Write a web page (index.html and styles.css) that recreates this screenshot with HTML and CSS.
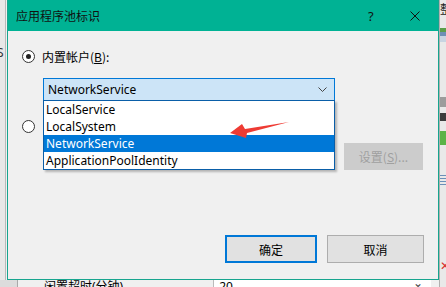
FILE: index.html
```html
<!DOCTYPE html>
<html lang="zh-CN">
<head>
  <meta charset="UTF-8">
  <title>应用程序池标识</title>
  <link rel="stylesheet" href="styles.css">
</head>
<body>
  <div class="desk">
    <div class="side-left"><span class="cut">S</span></div>
    <div class="side-right">
      <span class="ri ri-text">整</span>
      <span class="ri ri-doc"></span>
      <span class="ri ri-play"></span>
      <span class="ri ri-bar"></span>
      <span class="ri ri-green"></span>
      <span class="ri ri-lines"></span>
      <span class="ri ri-red">✕</span>
    </div>
    <div class="under">
      <span class="under-label">闲置超时(分钟)</span>
      <span class="under-field">20<span class="under-chev">⌄</span></span>
    </div>

    <div class="dialog">
      <div class="titlebar">
        <span class="title">应用程序池标识</span>
        <span class="help">?</span>
        <span class="close">
          <svg width="10" height="10" viewBox="0 0 10 10"><path d="M0.5 0.5 L9.5 9.5 M9.5 0.5 L0.5 9.5" stroke="#111" stroke-width="1"/></svg>
        </span>
      </div>

      <div class="content">
        <label class="opt">
          <span class="radio on"></span>
          <span>内置帐户(<u>B</u>):</span>
        </label>

        <div class="combo">
          <span>NetworkService</span>
          <svg class="chev" width="9" height="5" viewBox="0 0 9 5"><path d="M0.5 0.5 L4.5 4.5 L8.5 0.5" fill="none" stroke="#444" stroke-width="1"/></svg>
        </div>

        <label class="opt opt-custom">
          <span class="radio"></span>
          <span class="custom-label">自定义帐户(<u>C</u>):</span>
        </label>

        <div class="set-row">
          <button class="btn btn-disabled" disabled>设置(<u>S</u>)...</button>
        </div>

        <div class="actions">
          <button class="btn btn-default">确定</button>
          <button class="btn btn-cancel">取消</button>
        </div>

        <ul class="list">
          <li>LocalService</li>
          <li>LocalSystem</li>
          <li class="sel">NetworkService</li>
          <li>ApplicationPoolIdentity</li>
        </ul>

        <svg class="arrow" width="62" height="18" viewBox="0 0 62 18">
          <polygon points="0,12 12,3 15,8 59,1 17,12 16,17" fill="#ee3b34"/>
        </svg>
      </div>
    </div>
  </div>
</body>
</html>
```

FILE: styles.css
```css
body {
  margin: 0;
  font-family: "Noto Sans", "Noto Sans CJK SC", sans-serif;
  font-size: 12px;
  color: #000;
}

.desk {
  position: relative;
  width: 446px;
  height: 287px;
  overflow: hidden;
  background: #f0f0f0;
}

/* window behind the dialog */
.side-left {
  position: absolute;
  left: 0;
  top: 0;
  width: 5px;
  height: 287px;
  background: #e8e8e8;
  border-right: 1px solid #b9b9b9;
}

.side-left .cut {
  position: absolute;
  left: -3px;
  top: 44px;
  color: #333;
}

.side-right {
  position: absolute;
  left: 439px;
  top: 0;
  width: 7px;
  height: 287px;
  background: #e9e9e9;
  border-left: 1px solid #b0b0b0;
  display: flex;
  flex-direction: column;
  overflow: hidden;
}

.ri {
  display: block;
  flex: none;
}

.ri-text {
  height: 20px;
  font-size: 12px;
  line-height: 20px;
  color: #222;
}

.ri-doc {
  margin-top: 8px;
  height: 14px;
  background: linear-gradient(#5b9e4a 0 30%, #6d8fb5 30% 60%, #c8d4e2 60%);
}

.ri-play {
  margin-top: 55px;
  height: 10px;
  background: #9c9c9c;
}

.ri-bar {
  margin-top: 6px;
  height: 8px;
  background: #3c3c3c;
}

.ri-green {
  margin-top: 10px;
  height: 14px;
  background: #5bb347;
}

.ri-lines {
  margin-top: 30px;
  height: 12px;
  background: repeating-linear-gradient(#6b8fb8 0 1px, #e9e9e9 1px 3px);
}

.ri-red {
  margin-top: 72px;
  height: 14px;
  color: #d9322e;
  font-size: 12px;
  line-height: 14px;
}

.under {
  position: absolute;
  left: 0;
  top: 280px;
  width: 439px;
  height: 7px;
  display: flex;
  background: linear-gradient(to right, #dcdcdc 0 17px, #a9a9a9 17px 18px, #f0f0f0 18px);
  overflow: hidden;
}

.under-label {
  margin-left: 44px;
  line-height: 14px;
}

.under-field {
  margin-left: 90px;
  width: 212px;
  padding-left: 5px;
  background: #fff;
  border-left: 1px solid #bbb;
  line-height: 14px;
  position: relative;
}

.under-chev {
  position: absolute;
  right: 8px;
  top: -4px;
  color: #444;
}

/* dialog */
.dialog {
  position: absolute;
  left: 7px;
  top: 0;
  width: 430px;
  height: 279px;
  border: 1px solid #17a58f;
  border-top: 0;
  background: #f0f0f0;
  display: flex;
  flex-direction: column;
}

.titlebar {
  height: 31px;
  flex: none;
  background: #00b294;
  display: flex;
  align-items: center;
  padding-left: 8px;
}

.title {
  flex: 1;
  font-family: "Noto Sans CJK SC", sans-serif;
  font-size: 12px;
  color: #111;
}

.help {
  width: 10px;
  margin-right: 32px;
  font-size: 13px;
  color: #111;
}

.close {
  display: flex;
  margin-right: 18px;
}

.content {
  position: relative;
  flex: 1;
  display: flex;
  flex-direction: column;
  padding: 17px 14px 16px 14px;
}

.opt {
  display: flex;
  align-items: center;
  gap: 7px;
  height: 16px;
  font-family: "Noto Sans CJK SC", sans-serif;
}

.custom-label {
  color: #7a4a10;
}

.radio {
  width: 11px;
  height: 11px;
  border: 1px solid #333;
  border-radius: 50%;
  background: #fff;
  position: relative;
  flex: none;
}

.radio.on::after {
  content: "";
  position: absolute;
  left: 3px;
  top: 3px;
  width: 5px;
  height: 5px;
  border-radius: 50%;
  background: #222;
}

.combo {
  margin: 14px 0 0 21px;
  width: 279px;
  height: 21px;
  border: 1px solid #0078d7;
  background: #cce4f7;
  display: flex;
  align-items: center;
  justify-content: space-between;
  padding: 0 7px 0 4px;
}

.opt-custom {
  margin-top: 17px;
}

.set-row {
  display: flex;
  justify-content: flex-end;
  margin-top: 9px;
  padding-right: 1px;
}

.btn {
  font-family: "Noto Sans CJK SC", sans-serif;
  font-size: 12px;
  height: 28px;
  background: #e1e1e1;
  border: 1px solid #adadad;
  padding: 0;
  color: #000;
}

.btn-disabled {
  width: 79px;
  height: 27px;
  background: #cccccc;
  border-color: #cccccc;
  color: #a0a0a0;
}

.actions {
  margin-top: auto;
  display: flex;
  justify-content: flex-end;
  gap: 10px;
}

.btn-default {
  width: 92px;
  border: 2px solid #0078d7;
}

.btn-cancel {
  width: 97px;
}

.list {
  position: absolute;
  left: 35px;
  top: 69px;
  width: 290px;
  margin: 0;
  padding: 0;
  list-style: none;
  background: #fff;
  border: 1px solid #0a5ea8;
  box-shadow: 2px 2px 2px rgba(0, 0, 0, 0.25);
}

.list li {
  height: 17px;
  line-height: 17px;
  padding-left: 2px;
}

.list li.sel {
  background: #0078d7;
  color: #fff;
}

.arrow {
  position: absolute;
  left: 222px;
  top: 90px;
}
```
